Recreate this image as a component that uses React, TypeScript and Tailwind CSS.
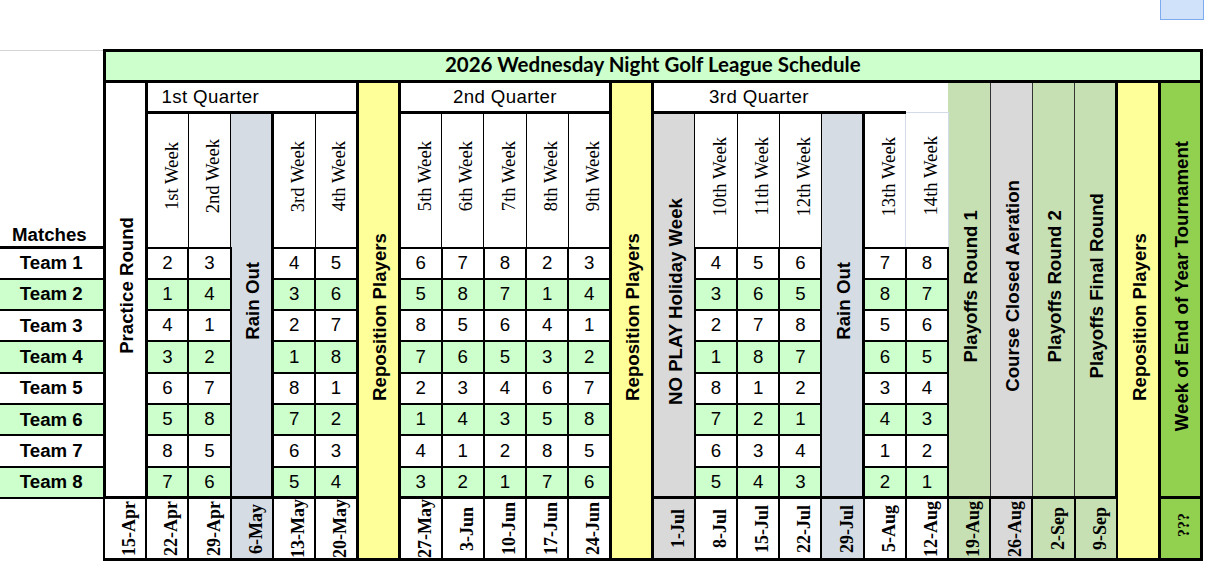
import React from "react";

const SANS = "font-['Liberation_Sans',Arial,sans-serif]";
const SERIF = "font-['Liberation_Serif','Times_New_Roman',serif]";

const MATCHES: number[][] = [
  [2, 3, 4, 5, 6, 7, 8, 2, 3, 4, 5, 6, 7, 8],
  [1, 4, 3, 6, 5, 8, 7, 1, 4, 3, 6, 5, 8, 7],
  [4, 1, 2, 7, 8, 5, 6, 4, 1, 2, 7, 8, 5, 6],
  [3, 2, 1, 8, 7, 6, 5, 3, 2, 1, 8, 7, 6, 5],
  [6, 7, 8, 1, 2, 3, 4, 6, 7, 8, 1, 2, 3, 4],
  [5, 8, 7, 2, 1, 4, 3, 5, 8, 7, 2, 1, 4, 3],
  [8, 5, 6, 3, 4, 1, 2, 8, 5, 6, 3, 4, 1, 2],
  [7, 6, 5, 4, 3, 2, 1, 7, 6, 5, 4, 3, 2, 1],
];

// date row, yellow "Reposition" columns are skipped (they span down)
const DATES: [string, string][] = [
  ["15-Apr", "bg-white"],
  ["22-Apr", "bg-white"],
  ["29-Apr", "bg-white"],
  ["6-May", "bg-[#d6dce4]"],
  ["13-May", "bg-white"],
  ["20-May", "bg-white"],
  ["27-May", "bg-white"],
  ["3-Jun", "bg-white"],
  ["10-Jun", "bg-white"],
  ["17-Jun", "bg-white"],
  ["24-Jun", "bg-white"],
  ["1-Jul", "bg-[#d9d9d9]"],
  ["8-Jul", "bg-white"],
  ["15-Jul", "bg-white"],
  ["22-Jul", "bg-white"],
  ["29-Jul", "bg-[#d6dce4]"],
  ["5-Aug", "bg-white"],
  ["12-Aug", "bg-white"],
  ["19-Aug", "bg-[#c6e0b4]"],
  ["26-Aug", "bg-[#d9d9d9]"],
  ["2-Sep", "bg-[#c6e0b4]"],
  ["9-Sep", "bg-[#c6e0b4]"],
];

// bottom-to-top text, nudged right a bit so glyphs sit centred like the sheet
function V({ children, className = "" }: { children: React.ReactNode; className?: string }) {
  return (
    <span className={`inline-block whitespace-nowrap rotate-180 [writing-mode:vertical-rl] leading-[1.1] ${className}`}>
      {children}
    </span>
  );
}

function Week({ label, className = "border-black" }: { label: string; className?: string }) {
  return (
    <td className={`border bg-white text-center align-middle p-0 ${className}`}>
      <V className={`${SERIF} text-[18.67px] translate-x-[4px]`}>{label}</V>
    </td>
  );
}

function Band({ label, rows, className }: { label: string; rows: number; className: string }) {
  return (
    <td rowSpan={rows} className={`text-center align-middle p-0 border-black ${className}`}>
      <V className={`${SANS} text-[18.67px] font-bold translate-x-[2px]`}>{label}</V>
    </td>
  );
}

function DateCell({ label, className }: { label: string; className: string }) {
  return (
    <td className={`border-2 border-t-[3px] border-b-[3px] border-black p-0 ${className}`}>
      <div className="h-[59px] flex items-center justify-center overflow-visible">
        <V className={`${SERIF} font-bold text-[18px] leading-none translate-x-[4px]`}>{label}</V>
      </div>
    </td>
  );
}

export default function App() {
  return (
    <div className={`w-[1212px] h-[575px] bg-white overflow-hidden text-black ${SANS}`}>
      <div className="h-[49px] flex justify-end pr-[8px]">
        <div className="w-[44px] h-[20px] bg-[#cfe2fa] border-x border-b border-[#7eaaf0]" />
      </div>

      <table className="table-fixed border-collapse w-[1203px] text-[18.67px]">
        <colgroup>
          <col className="w-[104px]" />
          {Array.from({ length: 26 }).map((_, i) => (
            <col key={i} />
          ))}
        </colgroup>
        <tbody>
          {/* title */}
          <tr className="h-[31px]">
            <td className="border-t border-t-[#d4d4d4]" />
            <td colSpan={26} className="border-[3px] border-black bg-[#ccffcc] text-center align-middle p-0">
              <span className="font-['Lato',sans-serif] font-bold text-[20.5px] leading-none">
                2026 Wednesday Night Golf League Schedule
              </span>
            </td>
          </tr>

          {/* quarters */}
          <tr className="h-[31px]">
            <td />
            <Band rows={10} label="Practice Round" className="bg-white border-l-[3px] border-r-[3px]" />
            <td colSpan={3} className="border-b-[3px] border-black text-center align-middle p-0 tracking-[0.4px]">
              1st Quarter
            </td>
            <td colSpan={2} className="border-b-[3px] border-black" />
            <Band rows={11} label="Reposition Players" className="bg-[#ffff99] border-x-[3px] border-b-[3px]" />
            <td colSpan={5} className="border-b-[3px] border-black text-center align-middle p-0 tracking-[0.4px]">
              2nd Quarter
            </td>
            <Band rows={11} label="Reposition Players" className="bg-[#ffff99] border-x-[3px] border-b-[3px]" />
            <td colSpan={5} className="border-b-[3px] border-black text-center align-middle p-0 tracking-[0.4px]">
              3rd Quarter
            </td>
            <td className="border-b-[3px] border-black" />
            <td className="border-b border-b-[#d4dbe8]" />
            <Band rows={10} label="Playoffs Round 1" className="bg-[#c6e0b4] border-r border-r-[#333]" />
            <Band rows={10} label="Course Closed Aeration" className="bg-[#d9d9d9] border-r border-r-[#333]" />
            <Band rows={10} label="Playoffs Round 2" className="bg-[#c6e0b4] border-r border-r-[#333]" />
            <Band rows={10} label="Playoffs Final Round" className="bg-[#c6e0b4] border-r-[3px]" />
            <Band rows={11} label="Reposition Players" className="bg-[#ffff99] border-r-[3px] border-b-[3px]" />
            <Band rows={10} label="Week of End of Year Tournament" className="bg-[#92d050] border-r-[3px]" />
          </tr>

          {/* weeks */}
          <tr className="h-[135px]">
            <td className="border-b-[3px] border-black align-bottom text-left pl-3 pb-0 font-bold leading-tight">
              Matches
            </td>
            <Week label="1st Week" />
            <Week label="2nd Week" />
            <Band rows={9} label="Rain Out" className="bg-[#d6dce4] border-l border-r-[3px]" />
            <Week label="3rd Week" />
            <Week label="4th Week" />
            <Week label="5th Week" />
            <Week label="6th Week" />
            <Week label="7th Week" />
            <Week label="8th Week" />
            <Week label="9th Week" />
            <Band rows={9} label="NO PLAY Holiday Week" className="bg-[#d9d9d9] border-l-[3px] border-r" />
            <Week label="10th Week" />
            <Week label="11th Week" />
            <Week label="12th Week" />
            <Band rows={9} label="Rain Out" className="bg-[#d6dce4] border-l border-r-[3px]" />
            <Week label="13th Week" className="border-black border-r-[#d4dbe8]" />
            <Week label="14th Week" className="border-[#d4dbe8]" />
          </tr>

          {/* teams */}
          {MATCHES.map((nums, i) => {
            const bg = i % 2 === 1 ? "bg-[#ccffcc]" : "bg-white";
            return (
              <tr key={i} className="h-[31.3px]">
                <td className={`border-b-2 border-r-[3px] border-black text-center align-middle p-0 font-bold ${bg}`}>
                  Team {i + 1}
                </td>
                {nums.map((n, j) => (
                  <td key={j} className={`border-2 border-black text-center align-middle p-0 leading-none ${bg}`}>
                    {n}
                  </td>
                ))}
              </tr>
            );
          })}

          {/* dates */}
          <tr>
            <td />
            {DATES.map(([d, bg], i) => (
              <DateCell key={i} label={d} className={bg} />
            ))}
            <td className="border-[3px] border-black bg-[#92d050] text-center align-middle p-0">
              <V className={`${SERIF} font-bold text-[16px] leading-none translate-x-[4px]`}>???</V>
            </td>
          </tr>
        </tbody>
      </table>
    </div>
  );
}
